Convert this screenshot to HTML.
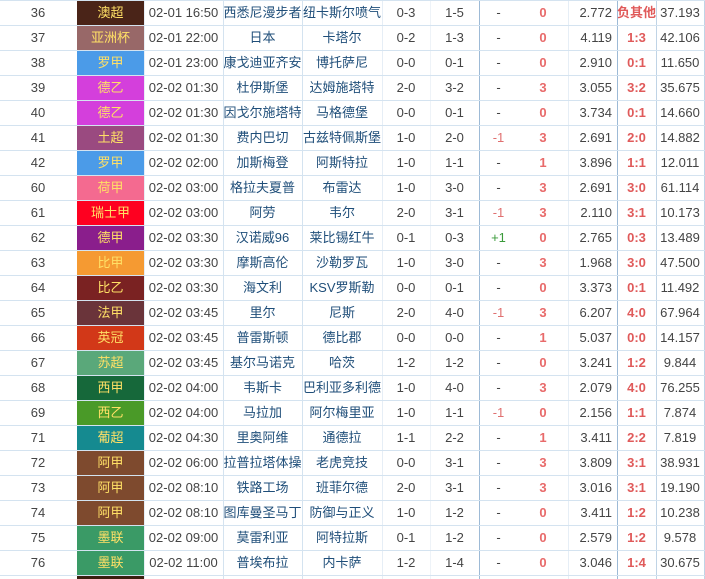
<!DOCTYPE html>
<html><head><meta charset="utf-8">
<style>
html,body{margin:0;padding:0;background:#fff;width:705px;height:579px;overflow:hidden}
body{font-family:"Liberation Sans","Noto Sans CJK SC","WenQuanYi Zen Hei",sans-serif;font-size:13px;color:#444;position:relative}
.r{position:absolute;left:0;width:705px;height:24px;border-bottom:1px solid #d4e3f0}
.c{position:absolute;top:0;height:24px;line-height:24px;text-align:center;white-space:nowrap;overflow:hidden}
.lg{color:#ffe066;height:24px}
.t{color:#1f4e79;font-size:13px}
.red{color:#e86a6a;font-weight:bold;font-size:13px}
.hc{color:#e07070}
.gr{color:#3a9a3a}
.sc{color:#e05a5a;font-weight:bold;font-size:13px}
.vl{position:absolute;top:0;width:1px;height:579px}
</style></head><body>
<div class="vl" style="left:144px;background:#e6eef6"></div>
<div class="vl" style="left:223px;background:#d4e3f0"></div>
<div class="vl" style="left:302px;background:#d4e3f0"></div>
<div class="vl" style="left:382px;background:#e6eef6"></div>
<div class="vl" style="left:430px;background:#eef3f8"></div>
<div class="vl" style="left:479px;background:#9dbad6"></div>
<div class="vl" style="left:568px;background:#e6eef6"></div>
<div class="vl" style="left:617px;background:#9dbad6"></div>
<div class="vl" style="left:656px;background:#c0d4e6"></div>
<div class="vl" style="left:704px;background:#c0d4e6"></div>
<div id="rows"></div>
<script>
var D=[
["36","澳超","#4a2418","02-01 16:50","西悉尼漫步者","纽卡斯尔喷气","0-3","1-5","-","0","2.772","负其他","37.193"],
["37","亚洲杯","#986868","02-01 22:00","日本","卡塔尔","0-2","1-3","-","0","4.119","1:3","42.106"],
["38","罗甲","#4b9be8","02-01 23:00","康戈迪亚齐安","博托萨尼","0-0","0-1","-","0","2.910","0:1","11.650"],
["39","德乙","#d43fdc","02-02 01:30","杜伊斯堡","达姆施塔特","2-0","3-2","-","3","3.055","3:2","35.675"],
["40","德乙","#d43fdc","02-02 01:30","因戈尔施塔特","马格德堡","0-0","0-1","-","0","3.734","0:1","14.660"],
["41","土超","#9a4a80","02-02 01:30","费内巴切","古兹特佩斯堡","1-0","2-0","-1","3","2.691","2:0","14.882"],
["42","罗甲","#4b9be8","02-02 02:00","加斯梅登","阿斯特拉","1-0","1-1","-","1","3.896","1:1","12.011"],
["60","荷甲","#f46a90","02-02 03:00","格拉夫夏普","布雷达","1-0","3-0","-","3","2.691","3:0","61.114"],
["61","瑞士甲","#fe0020","02-02 03:00","阿劳","韦尔","2-0","3-1","-1","3","2.110","3:1","10.173"],
["62","德甲","#8a1e8c","02-02 03:30","汉诺威96","莱比锡红牛","0-1","0-3","+1","0","2.765","0:3","13.489"],
["63","比甲","#f59a32","02-02 03:30","摩斯高伦","沙勒罗瓦","1-0","3-0","-","3","1.968","3:0","47.500"],
["64","比乙","#7a2222","02-02 03:30","海文利","KSV罗斯勒","0-0","0-1","-","0","3.373","0:1","11.492"],
["65","法甲","#6a343a","02-02 03:45","里尔","尼斯","2-0","4-0","-1","3","6.207","4:0","67.964"],
["66","英冠","#d23818","02-02 03:45","普雷斯顿","德比郡","0-0","0-0","-","1","5.037","0:0","14.157"],
["67","苏超","#5aa87a","02-02 03:45","基尔马诺克","哈茨","1-2","1-2","-","0","3.241","1:2","9.844"],
["68","西甲","#16683a","02-02 04:00","韦斯卡","巴利亚多利德","1-0","4-0","-","3","2.079","4:0","76.255"],
["69","西乙","#4a9a28","02-02 04:00","马拉加","阿尔梅里亚","1-0","1-1","-1","0","2.156","1:1","7.874"],
["71","葡超","#158a90","02-02 04:30","里奥阿维","通德拉","1-1","2-2","-","1","3.411","2:2","7.819"],
["72","阿甲","#7e4a2e","02-02 06:00","拉普拉塔体操","老虎竞技","0-0","3-1","-","3","3.809","3:1","38.931"],
["73","阿甲","#7e4a2e","02-02 08:10","铁路工场","班菲尔德","2-0","3-1","-","3","3.016","3:1","19.190"],
["74","阿甲","#7e4a2e","02-02 08:10","图库曼圣马丁","防御与正义","1-0","1-2","-","0","3.411","1:2","10.238"],
["75","墨联","#3a9a66","02-02 09:00","莫雷利亚","阿特拉斯","0-1","1-2","-","0","2.579","1:2","9.578"],
["76","墨联","#3a9a66","02-02 11:00","普埃布拉","内卡萨","1-2","1-4","-","0","3.046","1:4","30.675"],
["","","#3a2010","","","","","","","","","",""]
];
var X=[[0,76],[77,67],[144,79],[223,79],[302,80],[382,48],[430,49],[479,39],[518,50],[568,49],[617,39],[656,48]];
var h='<div class="r" style="top:-24px"><div class="c" style="left:77px;width:67px;background:#4a2418"></div></div>';
D.forEach(function(d,i){
 var top=1+25*i;
 h+='<div class="r" style="top:'+top+'px">';
 var v=[d[0],d[1],d[3],d[4],d[5],d[6],d[7],d[8],d[9],d[10],d[11],d[12]];
 v.forEach(function(s,j){
  var cls='c',st='left:'+X[j][0]+'px;width:'+X[j][1]+'px;';
  if(j==1){cls+=' lg';st+='background:'+d[2]+';';}
  if(j==3||j==4)cls+=' t';
  if(j==7){if(s=='+1')cls+=' gr';else if(s=='-1')cls+=' hc';}
  if(j==8)cls+=' red';
  if(j==9){st+='text-align:right;width:'+(X[j][1]-5)+'px;';}
  if(j==10)cls+=' sc';
  h+='<div class="'+cls+'" style="'+st+'">'+s+'</div>';
 });
 h+='</div>';
});
document.getElementById('rows').innerHTML=h;
</script>
</body></html>
